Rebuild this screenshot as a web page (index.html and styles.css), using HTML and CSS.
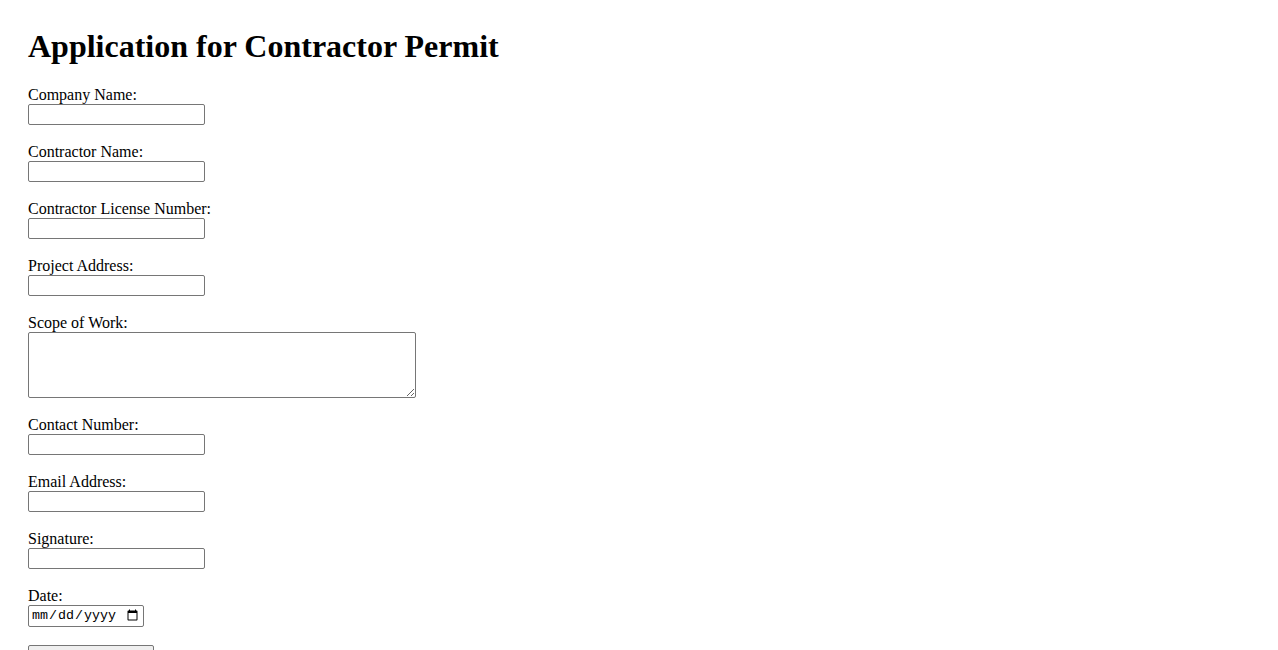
FILE: index.html
```html
<!DOCTYPE html>
<html lang="en">
<head>
    <meta charset="UTF-8">
    <meta name="viewport" content="width=device-width, initial-scale=1.0">
    <title>Application for Contractor Permit</title>
    <link rel="stylesheet" href="styles.css">
</head>
<body>
    <h1>Application for Contractor Permit</h1>

    <form class="permit-form">
        <div class="field">
            <label for="company">Company Name:</label>
            <input type="text" id="company" name="company">
        </div>
        <div class="field">
            <label for="contractor">Contractor Name:</label>
            <input type="text" id="contractor" name="contractor">
        </div>
        <div class="field">
            <label for="license">Contractor License Number:</label>
            <input type="text" id="license" name="license">
        </div>
        <div class="field">
            <label for="address">Project Address:</label>
            <input type="text" id="address" name="address">
        </div>
        <div class="field">
            <label for="scope">Scope of Work:</label>
            <textarea id="scope" name="scope"></textarea>
        </div>
        <div class="field">
            <label for="phone">Contact Number:</label>
            <input type="text" id="phone" name="phone">
        </div>
        <div class="field">
            <label for="email">Email Address:</label>
            <input type="text" id="email" name="email">
        </div>
        <div class="field">
            <label for="signature">Signature:</label>
            <input type="text" id="signature" name="signature">
        </div>
        <div class="field field-date">
            <label for="date">Date:</label>
            <input type="date" id="date" name="date">
        </div>
        <button type="submit" class="submit-button">Submit Application</button>
    </form>
</body>
</html>
```

FILE: styles.css
```css
body {
    margin: 0;
    padding: 28px;
    background-color: #fff;
    color: #000;
    font-family: "Liberation Serif", "Times New Roman", serif;
    font-size: 16px;
}
h1 {
    margin: -1px 0 21px 0;
    font-size: 32px;
    line-height: 39px;
    font-weight: bold;
}
.permit-form {
    display: flex;
    flex-direction: column;
    align-items: flex-start;
}
.field {
    display: flex;
    flex-direction: column;
    align-items: flex-start;
    margin-bottom: 19px;
}
.field-date {
    margin-bottom: 18px;
}
.field label {
    line-height: 15px;
    height: 15px;
    padding-bottom: 2px;
}
.field input,
.field textarea {
    box-sizing: border-box;
    margin: 0;
    border: 1px solid #767676;
    border-radius: 2px;
    background-color: #fff;
    font-family: "Liberation Sans", Arial, sans-serif;
    font-size: 13.33px;
}
.field input[type="text"] {
    width: 177px;
    height: 21px;
    padding: 1px 2px;
}
.field textarea {
    width: 388px;
    height: 66px;
    padding: 2px;
    resize: both;
}
.field input[type="date"] {
    width: 116px;
    height: 22px;
    padding: 1px 2px;
    font-family: "Liberation Mono", "Courier New", monospace;
    font-size: 13.33px;
}
.submit-button {
    box-sizing: border-box;
    width: 126px;
    height: 21px;
    margin: 0;
    padding: 1px 6px;
    border: 1px solid #767676;
    border-radius: 2px;
    background-color: #efefef;
    font-family: "Liberation Sans", Arial, sans-serif;
    font-size: 13.33px;
}
```
